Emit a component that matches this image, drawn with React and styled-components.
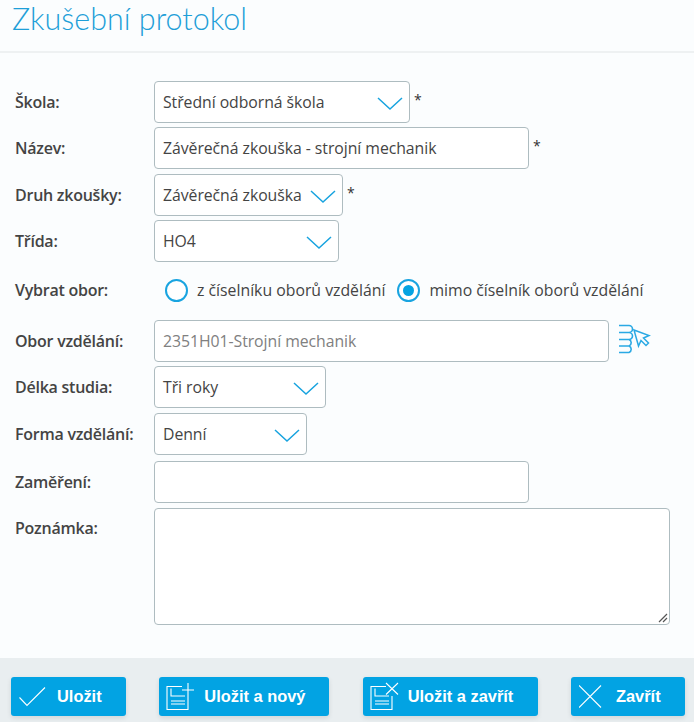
import React from "react";
import styled, { createGlobalStyle } from "styled-components";

const Global = createGlobalStyle`
  html, body { margin: 0; padding: 0; background: #fbfdfe; }
  body { font-family: "Open Sans", "Noto Sans", sans-serif; color: #444; }
  * { box-sizing: border-box; }
`;
const Page = styled.div`
  width: 694px; height: 722px; display: flex; flex-direction: column; overflow: hidden; background: #fbfdfe;
`;
const Header = styled.header`
  height: 53px; padding: 0 0 0 12px; border-bottom: 2px solid #eef1f2; flex: none;
`;
const Title = styled.h1`
  margin: 0; font: 300 30.5px/37px Lato, sans-serif; color: #1e9fd8; letter-spacing: 0;
`;
const Form = styled.form`
  flex: 1; padding: 28px 0 0 15px; display: flex; flex-direction: column;
`;
const Row = styled.div`
  display: flex; align-items: ${p => p.$top ? "flex-start" : "center"}; height: ${p => p.$h || 42}px; margin-bottom: ${p => p.$mb ?? 4}px;
`;
const Label = styled.label`
  width: 139px; flex: none; font: 600 16px/20px "Open Sans", sans-serif; color: #444; padding-top: ${p => p.$top ? 10 : 0}px; letter-spacing: -0.25px;
`;
const Field = styled.div`
  position: relative; width: ${p => p.$w}px; height: ${p => p.$h || 42}px; border: 1px solid #aebcc0; border-radius: 4px; background: #fff;
  font: 400 15.8px/40px "Open Sans", sans-serif; padding-left: 8px; color: ${p => p.$muted ? "#808080" : "#444"}; white-space: nowrap; letter-spacing: -0.05px;
`;
const Chevron = styled.svg`
  position: absolute; right: 6px; top: 14px; width: 26px; height: 15px; fill: none; stroke: #17a3df; stroke-width: 1.5;
`;
const Star = styled.span`
  margin-left: 4px; font-size: 14px; margin-top: -6px; color: #333;
`;
const Grip = styled.svg`
  position: absolute; right: 1px; bottom: 1px; width: 10px; height: 10px; stroke: #555; stroke-width: 1.2;
`;
const Radios = styled.div`
  display: flex; align-items: center; padding-left: 11px;
`;
const RadioItem = styled.span`
  display: flex; align-items: center; white-space: nowrap; font: 400 15.8px/20px "Open Sans", sans-serif; letter-spacing: 0; margin-right: ${p => p.$mr || 0}px;
`;
const RadioDot = styled.span`
  width: 23px; height: 23px; border-radius: 50%; border: 2px solid #19a4e0; background: #fff; margin-right: 9px; display: flex; align-items: center; justify-content: center;
  &::after { content: ""; width: 11px; height: 11px; border-radius: 50%; background: ${p => p.$on ? "#04a3e2" : "transparent"}; }
`;
const PickIcon = styled.svg`
  width: 34px; height: 34px; margin-left: 8px; fill: none; stroke: #2aa9e4; stroke-width: 1.6;
`;
const Footer = styled.footer`
  height: 64px; flex: none; background: #e9eef0; padding: 19px 9px 6px 11px; display: flex; justify-content: space-between;
`;
const Button = styled.button`
  width: ${p => p.$w}px; height: 39px; border: 0; border-radius: 3px; background: #02a3e3; color: #fff; box-shadow: 0 2px 5px rgba(0,0,0,.1);
  font: 700 16.4px/39px "Liberation Sans", Arial, sans-serif; display: flex; align-items: center; padding: 0 0 0 ${p => p.$pl}px;
`;
const BtnIcon = styled.svg`
  width: ${p => p.$s}px; height: 30px; flex: none; fill: none; stroke: #fff; stroke-width: 1.1; margin-right: ${p => p.$mr}px;
`;

const Select = ({ w, children }) => (
  <Field $w={w}>{children}
    <Chevron viewBox="0 0 26 15"><path d="M1 2l12 11L25 2" /></Chevron>
  </Field>
);
const Doc = ({ children }) => (
  <BtnIcon $s={30} $mr={9} viewBox="0 0 30 30">
    <path d="M17 4.500H2v23h21V14" /><path d="M6 6.500V14h14" /><path d="M6 19h14M6 22h14" />{children}
  </BtnIcon>
);

export default function App() {
  return (
    <Page>
      <Global />
      <Header><Title>Zkušební protokol</Title></Header>
      <Form>
        <Row><Label>Škola:</Label><Select w={256}>Střední odborná škola</Select><Star>*</Star></Row>
        <Row $mb={5}><Label>Název:</Label><Field $w={375}>Závěrečná zkouška - strojní mechanik</Field><Star>*</Star></Row>
        <Row><Label>Druh zkoušky:</Label><Select w={189}>Závěrečná zkouška</Select><Star>*</Star></Row>
        <Row $mb={16}><Label>Třída:</Label><Select w={185}>HO4</Select></Row>
        <Row $h={24} $mb={18}>
          <Label>Vybrat obor:</Label>
          <Radios>
            <RadioItem $mr={12}><RadioDot />z číselníku oborů vzdělání</RadioItem>
            <RadioItem><RadioDot $on />mimo číselník oborů vzdělání</RadioItem>
          </Radios>
        </Row>
        <Row><Label>Obor vzdělání:</Label><Field $w={455} $muted>2351H01-Strojní mechanik</Field>
          <PickIcon viewBox="0 0 34 34">
            <path d="M2 1.500h10a3.500 3.500 0 0 1 0 7H2M12 8.500a3.500 3.500 0 0 1 0 7H2M2 22h10a3.500 3.500 0 0 0 0-6.500M12 22a3.500 3.500 0 0 1 0 6.500H2" />
            <path d="M17 6l15 5.500-5.500 2.500 5 5-2.500 2.500-5-5-2.500 5.500z" strokeWidth="1.500" />
          </PickIcon>
        </Row>
        <Row $mb={5}><Label>Délka studia:</Label><Select w={172}>Tři roky</Select></Row>
        <Row $mb={6}><Label>Forma vzdělání:</Label><Select w={153}>Denní</Select></Row>
        <Row $mb={5}><Label>Zaměření:</Label><Field $w={375} /></Row>
        <Row $top $h={117} $mb={0}><Label $top>Poznámka:</Label>
          <Field $w={516} $h={117}><Grip viewBox="0 0 10 10"><path d="M1 9l8-8M5 9l4-4" /></Grip></Field>
        </Row>
      </Form>
      <Footer>
        <Button $w={115} $pl={8} type="button">
          <BtnIcon $s={28} $mr={10} viewBox="0 0 28 30"><path d="M.5 15.500l7.500 8 18-18" /></BtnIcon>Uložit
        </Button>
        <Button $w={170} $pl={6} type="button">
          <Doc><path d="M17 8h12M23 1v13" /></Doc>Uložit a nový
        </Button>
        <Button $w={175} $pl={6} type="button">
          <Doc><path d="M17 1l12 11.500M29 1L17 12.500" /></Doc>Uložit a zavřít
        </Button>
        <Button $w={114} $pl={8} type="button">
          <BtnIcon $s={24} $mr={13} viewBox="0 0 24 30"><path d="M0 3.500l22 22M22 3.500L0 25.500" /></BtnIcon>Zavřít
        </Button>
      </Footer>
    </Page>
  );
}
